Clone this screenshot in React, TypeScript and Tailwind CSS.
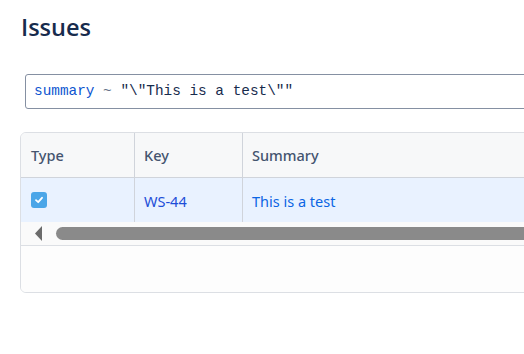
import React from "react";

export default function App() {
  return (
    <div className="w-[524px] h-[354px] overflow-hidden bg-white font-['Noto_Sans',sans-serif]">
      <div className="pl-5 pt-[11px]">
        {/* Title */}
        <h1 className="pl-[1px] text-[23.5px] leading-[32px] font-semibold font-['Open_Sans',sans-serif] text-[#172b4d]">Issues</h1>

        {/* JQL query */}
        <div className="mt-[31px] ml-[5px] w-[520px] h-[35px] border border-[#8590a2] rounded-[3px] flex items-center px-2 font-['Liberation_Mono',monospace] text-[14.4px] whitespace-pre">
          <span className="text-[#0c55cf]">summary</span>
          <span className="text-[#626f86]"> ~ </span>
          <span className="text-[#172b4d]">"\"This is a test\""</span>
        </div>

        {/* Table */}
        <div className="mt-[23px] w-[560px] h-[161px] border border-[#dcdfe4] rounded-[6px] overflow-hidden flex flex-col">
          <div className="flex h-[45px] bg-[#f7f8f9] border-b border-[#d0d4db] text-[14.5px] font-medium text-[#44546f]">
            <div className="w-[114px] border-r border-[#d0d4db] flex items-center px-[10px] pt-[2px]">Type</div>
            <div className="w-[108px] border-r border-[#d0d4db] flex items-center px-[9px] pt-[2px]">Key</div>
            <div className="flex-1 flex items-center px-[9px] pt-[2px]">Summary</div>
          </div>
          <div className="flex h-[44px] bg-[#e9f2ff] text-[14.5px] text-[#0c66e4]">
            <div className="w-[114px] border-r border-[#d0d4db] flex items-center px-[10px]">
              <div className="w-[16px] h-[16px] rounded-[3px] bg-[#4ba6e8] flex items-center justify-center">
                <svg width="10" height="10" viewBox="0 0 10 10">
                  <path d="M2 5.2 L4.2 7.2 L8 2.8" fill="none" stroke="white" strokeWidth="1.8" strokeLinecap="round" strokeLinejoin="round" />
                </svg>
              </div>
            </div>
            <div className="w-[108px] border-r border-[#d0d4db] flex items-center px-[9px] pt-[3px] text-[#1d4ed8]">WS-44</div>
            <div className="flex-1 flex items-center px-[9px] pt-[3px]">This is a test</div>
          </div>
          {/* Horizontal scrollbar */}
          <div className="h-[24px] bg-[#fafafa] flex items-center border-b border-[#dcdfe4]">
            <div className="w-[35px] flex pl-[14px]">
              <svg width="7" height="15" viewBox="0 0 7 15">
                <path d="M7 0 L0 7.5 L7 15 Z" fill="#6b6b6b" />
              </svg>
            </div>
            <div className="flex-1 h-[13px] rounded-l-[7px] bg-[#8a8a8a]" />
          </div>
          <div className="flex-1 bg-[#fdfdfd]" />
        </div>
      </div>
    </div>
  );
}
